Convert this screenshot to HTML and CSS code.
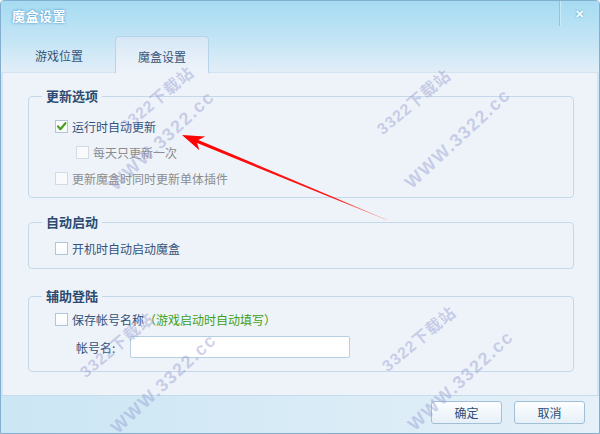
FILE: index.html
```html
<!DOCTYPE html>
<html lang="zh-CN">
  <head>
    <meta charset="UTF-8" />
    <title>魔盒设置</title>
    <link rel="stylesheet" href="styles.css">
  </head>
  <body>
    <div class="window">
      <div class="head">
        <div class="titlebar">
          <span class="title">魔盒设置</span>
          <span class="close">✕</span>
        </div>
        <div class="tabs">
          <div class="tab">游戏位置</div>
          <div class="tab active">魔盒设置</div>
        </div>
      </div>

      <div class="panel">
        <fieldset class="group g1">
          <legend>更新选项</legend>
          <label class="opt">
            <span class="box checked">
              <svg width="13" height="13" viewBox="0 0 13 13"><path d="M3 6.4 L5.4 9.2 L10.4 3.2" fill="none" stroke="#4a9e1c" stroke-width="2.2" stroke-linecap="round" stroke-linejoin="round"/></svg>
            </span>
            运行时自动更新
          </label>
          <label class="opt sub off"><span class="box"></span>每天只更新一次</label>
          <label class="opt off"><span class="box"></span>更新魔盒时同时更新单体插件</label>
        </fieldset>

        <fieldset class="group g2">
          <legend>自动启动</legend>
          <label class="opt"><span class="box"></span>开机时自动启动魔盒</label>
        </fieldset>

        <fieldset class="group g3">
          <legend>辅助登陆</legend>
          <label class="opt"><span class="box"></span>保存帐号名称<span class="hint">（游戏启动时自动填写）</span></label>
          <div class="acct">
            <span class="acct-label">帐号名:</span>
            <input class="acct-input" type="text">
          </div>
        </fieldset>
      </div>

      <div class="footer">
        <button class="btn">确定</button>
        <button class="btn">取消</button>
      </div>

      <!-- watermark overlay -->
      <div class="wm site" style="left:155px;top:97px">3322下载站</div>
      <div class="wm url" style="left:161px;top:140px">WWW.3322.cc</div>
      <div class="wm site" style="left:412px;top:100px">3322下载站</div>
      <div class="wm url" style="left:457px;top:138px">WWW.3322.cc</div>
      <div class="wm site" style="left:115px;top:343px">3322下载站</div>
      <div class="wm url" style="left:163px;top:383px">WWW.3322.cc</div>
      <div class="wm site" style="left:417px;top:337px">3322下载站</div>
      <div class="wm url" style="left:460px;top:380px">WWW.3322.cc</div>

      <svg class="arrow" width="600" height="434" viewBox="0 0 600 434">
        <defs>
          <linearGradient id="fade" gradientUnits="userSpaceOnUse" x1="182" y1="135" x2="387" y2="220">
            <stop offset="0" stop-color="#ff0000"/>
            <stop offset="0.75" stop-color="#ff1a1a"/>
            <stop offset="1" stop-color="#ff8888" stop-opacity="0.5"/>
          </linearGradient>
        </defs>
        <polygon fill="url(#fade)" points="182,135 205.2,136.5 198.3,140 387.1,219.7 386.9,220.3 197.1,143 199.4,150.3"/>
      </svg>
    </div>
  </body>
</html>
```

FILE: styles.css
```css
body {
  margin: 0;
  font-family: "Noto Sans CJK SC", "Liberation Sans", sans-serif;
  font-size: 12px;
  background: #fff;
}
.window {
  position: relative;
  width: 600px;
  height: 434px;
  box-sizing: border-box;
  border: 1px solid #84aecd;
  border-radius: 4px 4px 0 0;
  background: #d3e7f4;
  overflow: hidden;
  display: flex;
  flex-direction: column;
}
.head {
  height: 72px;
  background: linear-gradient(#a6dbf2, #c4e5f5 55%, #e2eef8);
}
.titlebar {
  height: 36px;
  display: flex;
  justify-content: space-between;
  align-items: flex-start;
}
.title {
  margin: 6px 0 0 11px;
  line-height: 18px;
  font-size: 13px;
  font-weight: bold;
  letter-spacing: 0.5px;
  color: #fff;
  text-shadow: 0 0 3px #5fa7d6, 0 0 2px #5fa7d6;
}
.close {
  width: 39px;
  height: 25px;
  border-left: 1px solid #8fc3df;
  box-shadow: inset 1px 0 0 #c8ebf9;
  text-align: center;
  line-height: 24px;
  font-size: 11px;
  font-weight: bold;
  color: #fff;
  text-shadow: 0 0 2px #4b93c4;
}
.tabs {
  height: 36px;
  box-sizing: border-box;
  border-bottom: 1px solid #d2e3ef;
  display: flex;
  align-items: flex-end;
  padding-left: 11px;
  gap: 9px;
}
.tab {
  width: 94px;
  height: 36px;
  box-sizing: border-box;
  text-align: center;
  line-height: 18px;
  padding-top: 11px;
  color: #355479;
}
.tab.active {
  border: 1px solid #b7d3e8;
  border-bottom: none;
  border-radius: 4px 4px 0 0;
  margin-bottom: -1px;
  height: 37px;
  background: linear-gradient(#d6e7f7, #e6eff8 60%, #eef3f9);
}
.panel {
  height: 322px;
  background: #eef3f9;
  border-left: 2px solid #d3e6f3;
  border-right: 2px solid #d3e6f3;
  padding-top: 15px;
  box-sizing: border-box;
}
.group {
  margin: 0 23px 0 25px;
  padding: 0;
  min-width: 0;
  border: 1px solid #c3d9ea;
  border-radius: 4px;
}
.group legend {
  margin-left: 13px;
  padding: 0 4px;
  line-height: 16px;
  font-size: 13px;
  font-weight: bold;
  color: #2b4b72;
}
.g1 { padding: 9px 0 6px; }
.g2 { margin-top: 16px; padding: 5px 0 7px; }
.g3 { margin-top: 19px; padding: 2px 0 9px; }
.opt {
  display: flex;
  align-items: center;
  height: 26px;
  margin-left: 26px;
  color: #34527a;
}
.opt.sub { margin-left: 47px; }
.opt.off { color: #8c8c8c; }
.box {
  width: 13px;
  height: 13px;
  box-sizing: border-box;
  border: 1px solid #b3c6d8;
  background: linear-gradient(#fff, #f7fafc);
  margin-right: 4px;
  display: flex;
}
.box svg { margin: -1px; }
.opt.off .box {
  border-color: #d2dbe4;
  background: #f8fafc;
}
.hint { color: #3f9f16; }
.acct {
  height: 30px;
  display: flex;
  align-items: center;
  margin-left: 47px;
  color: #34527a;
}
.acct-label { width: 54px; }
.acct-input {
  width: 220px;
  height: 22px;
  box-sizing: border-box;
  border: 1px solid #b7cfe2;
  border-radius: 2px;
  background: #fff;
  margin: 0;
}
.footer {
  flex: 1;
  border-top: 1px solid #c5dcec;
  background: linear-gradient(to right, #cbe6f4, #e5f0f8);
  display: flex;
  justify-content: flex-end;
  align-items: flex-start;
  gap: 12px;
  padding: 5px 14px 0 0;
}
.btn {
  width: 71px;
  height: 23px;
  border: 1px solid #a3bfd6;
  border-radius: 3px;
  background: linear-gradient(#fdfeff, #e6f0f8);
  font-family: "Noto Sans CJK SC", sans-serif;
  font-size: 12px;
  color: #2c4c73;
  padding: 0;
}
.wm {
  position: absolute;
  white-space: nowrap;
  font-family: "Liberation Sans", "Noto Sans CJK SC", sans-serif;
  font-weight: bold;
  color: rgba(150, 156, 210, 0.45);
  pointer-events: none;
}
.wm.site {
  font-size: 16px;
  letter-spacing: 1px;
  transform: translate(-50%, -50%) rotate(-40deg);
}
.wm.url {
  font-size: 18px;
  letter-spacing: 1.5px;
  transform: translate(-50%, -50%) rotate(-43deg);
}
.arrow {
  position: absolute;
  left: -1px;
  top: -1px;
  pointer-events: none;
}
```
